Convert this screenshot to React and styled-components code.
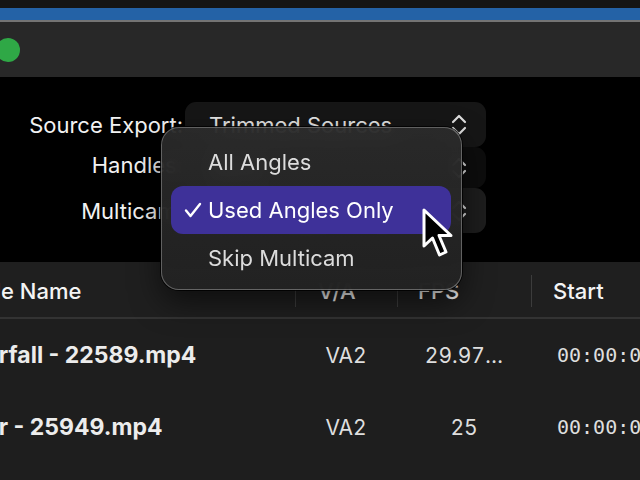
import React from "react";
import styled, { createGlobalStyle } from "styled-components";

const Global = createGlobalStyle`
  html, body { margin: 0; padding: 0; background: #000; }
  body { overflow: hidden; font-family: Inter, "Noto Sans", "Liberation Sans", sans-serif; -webkit-font-smoothing: antialiased; }
`;

const Screen = styled.div`
  width: 640px;
  height: 480px;
  overflow: hidden;
  background: #000;
  display: flex;
  flex-direction: column;
`;

const TopStrip = styled.div`
  height: 8px;
  background: #151515;
  flex: none;
`;

const AccentBar = styled.div`
  height: 12px;
  background: #2462a6;
  flex: none;
`;

/* window is scrolled so that its left part sits beyond the screen edge */
const Window = styled.div`
  margin-left: -100px;
  width: 740px;
  flex: 1;
  display: flex;
  flex-direction: column;
  background: #000;
`;

const TitleBar = styled.div`
  height: 57px;
  box-sizing: border-box;
  border-top: 2px solid #747474;
  background: #282828;
  display: flex;
  align-items: center;
  gap: 16px;
  padding-left: 16px;
`;

const Light = styled.span`
  width: 24px;
  height: 24px;
  border-radius: 50%;
  background: ${(p) => p.$color};
`;

const FormArea = styled.div`
  position: relative;
  z-index: 2;
  height: 185px;
  box-sizing: border-box;
  padding-top: 25px;
  background: #000;
`;

const FormGrid = styled.div`
  display: grid;
  grid-template-columns: 283px 301px;
  grid-auto-rows: auto;
  column-gap: 2px;
`;

const Label = styled.div`
  text-align: right;
  font-size: 22px;
  color: #f2f2f2;
  align-self: center;
  transform: translateY(${(p) => p.$nudge || 0}px);
`;

const SelectBox = styled.div`
  position: relative;
  height: ${(p) => p.$h}px;
  box-sizing: border-box;
  border-radius: 11px;
  background: ${(p) => p.$bg};
  display: flex;
  align-items: center;
  padding: 0 18px 0 24px;
  font-size: 22px;
  color: #e4e4e4;
`;

const SelectValue = styled.span`
  flex: 1;
  white-space: nowrap;
`;

const Chevrons = () => (
  <svg width="18" height="24" viewBox="0 0 18 24" fill="none" stroke="#dedede" strokeWidth="2.2" strokeLinecap="round" strokeLinejoin="round">
    <polyline points="3,9 9,3 15,9" />
    <polyline points="3,15 9,21 15,15" />
  </svg>
);

const Menu = styled.div`
  position: absolute;
  left: -24px;
  top: -61px;
  width: 301px;
  height: 163px;
  box-sizing: border-box;
  padding: 10px 10px 9px 9px;
  border-radius: 18px;
  background: linear-gradient(180deg, rgba(44, 44, 44, 0.9), rgba(34, 34, 34, 0.97));
  backdrop-filter: blur(10px);
  border: 1px solid rgba(150, 150, 150, 0.55);
  box-shadow: 0 0 0 1px rgba(0, 0, 0, 0.85), 0 12px 30px rgba(0, 0, 0, 0.55);
  display: flex;
  flex-direction: column;
`;

const MenuItem = styled.div`
  height: 48px;
  flex: none;
  border-radius: 12px;
  display: flex;
  align-items: center;
  position: relative;
  padding-left: 37px;
  font-size: 22px;
  color: ${(p) => (p.$active ? "#ffffff" : "#dcdcdc")};
  background: ${(p) => (p.$active ? "#3e3199" : "transparent")};
`;

const CheckMark = styled.svg`
  position: absolute;
  left: 13px;
  top: 16px;
`;

const Cursor = styled.svg`
  position: absolute;
  left: 259px;
  top: 79px;
  pointer-events: none;
`;

const Table = styled.div`
  flex: 1;
  background: #1e1e1e;
  display: flex;
  flex-direction: column;
`;

const Columns = "395px 102px 134px 1fr";

const HeaderRow = styled.div`
  height: 57px;
  box-sizing: border-box;
  padding-top: 2px;
  border-bottom: 2px solid #333;
  background: #1f1f1f;
  display: grid;
  grid-template-columns: ${Columns};
  align-items: center;
`;

const HeadCell = styled.div`
  position: relative;
  font-size: 22px;
  font-weight: 500;
  color: #f4f4f4;
  padding-left: ${(p) => p.$pad}px;
  white-space: nowrap;
  ${(p) =>
    p.$divider &&
    `&::before {
      content: "";
      position: absolute;
      left: 0;
      top: 50%;
      margin-top: -16px;
      width: 1px;
      height: 32px;
      background: #3c3c3c;
    }`}
`;

const DataRow = styled.div`
  height: 72px;
  display: grid;
  grid-template-columns: ${Columns};
  align-items: center;
`;

const NameCell = styled.div`
  padding-left: 41px;
  font-size: 23px;
  font-weight: 700;
  color: #ececec;
  white-space: nowrap;
`;

const Cell = styled.div`
  font-size: 21px;
  color: #dedede;
  text-align: ${(p) => p.$align || "left"};
  padding-left: ${(p) => p.$pad || 0}px;
  white-space: nowrap;
  font-variant-numeric: tabular-nums;
`;

const Timecode = styled.div`
  padding-left: 26px;
  font-family: "DejaVu Sans Mono", "Liberation Mono", monospace;
  font-size: 20px;
  color: #dedede;
  white-space: nowrap;
`;

const clips = [
  { name: "Waterfall - 22589.mp4", va: "VA2", fps: "29.97…", start: "00:00:00:00" },
  { name: "Water - 25949.mp4", va: "VA2", fps: "25", start: "00:00:00:00" },
];

export default function App() {
  return (
    <>
      <Global />
      <Screen>
        <TopStrip />
        <AccentBar />
        <Window>
          <TitleBar>
            <Light $color="#ff5f57" />
            <Light $color="#febc2e" />
            <Light $color="#2fa846" />
          </TitleBar>

          <FormArea>
            <FormGrid>
              <Label>Source Export:</Label>
              <SelectBox $h={45} $bg="#161616">
                <SelectValue>Trimmed Sources</SelectValue>
                <Chevrons />
              </SelectBox>

              <Label $nudge={-3}>Handles:</Label>
              <SelectBox $h={41} $bg="#0d0d0d">
                <SelectValue>None</SelectValue>
                <Chevrons />
              </SelectBox>

              <Label>Multicam:</Label>
              <SelectBox $h={45} $bg="#1d1d1d">
                <SelectValue>Used Angles Only</SelectValue>
                <Chevrons />
                <Menu>
                  <MenuItem>All Angles</MenuItem>
                  <MenuItem $active>
                    <CheckMark width="18" height="16" viewBox="0 0 18 16" fill="none" stroke="#fff" strokeWidth="2.4" strokeLinecap="round" strokeLinejoin="round">
                      <polyline points="2,8.5 6.5,14 16,2" />
                    </CheckMark>
                    Used Angles Only
                  </MenuItem>
                  <MenuItem>Skip Multicam</MenuItem>
                  <Cursor width="36" height="56" viewBox="0 0 36 56">
                    <path
                      d="M3 3 L3 39 L11.5 31 L18.5 48 L25 45 L18 28.5 L30 28.5 Z"
                      fill="#000"
                      stroke="#fff"
                      strokeWidth="3"
                      strokeLinejoin="round"
                    />
                  </Cursor>
                </Menu>
              </SelectBox>
            </FormGrid>
          </FormArea>

          <Table>
            <HeaderRow>
              <HeadCell $pad={77}>File Name</HeadCell>
              <HeadCell $pad={23} $divider>V/A</HeadCell>
              <HeadCell $pad={21} $divider>FPS</HeadCell>
              <HeadCell $pad={22} $divider>Start</HeadCell>
            </HeaderRow>
            {clips.map((c) => (
              <DataRow key={c.name}>
                <NameCell>{c.name}</NameCell>
                <Cell $align="center">{c.va}</Cell>
                <Cell $align="center">{c.fps}</Cell>
                <Timecode>{c.start}</Timecode>
              </DataRow>
            ))}
          </Table>
        </Window>
      </Screen>
    </>
  );
}
